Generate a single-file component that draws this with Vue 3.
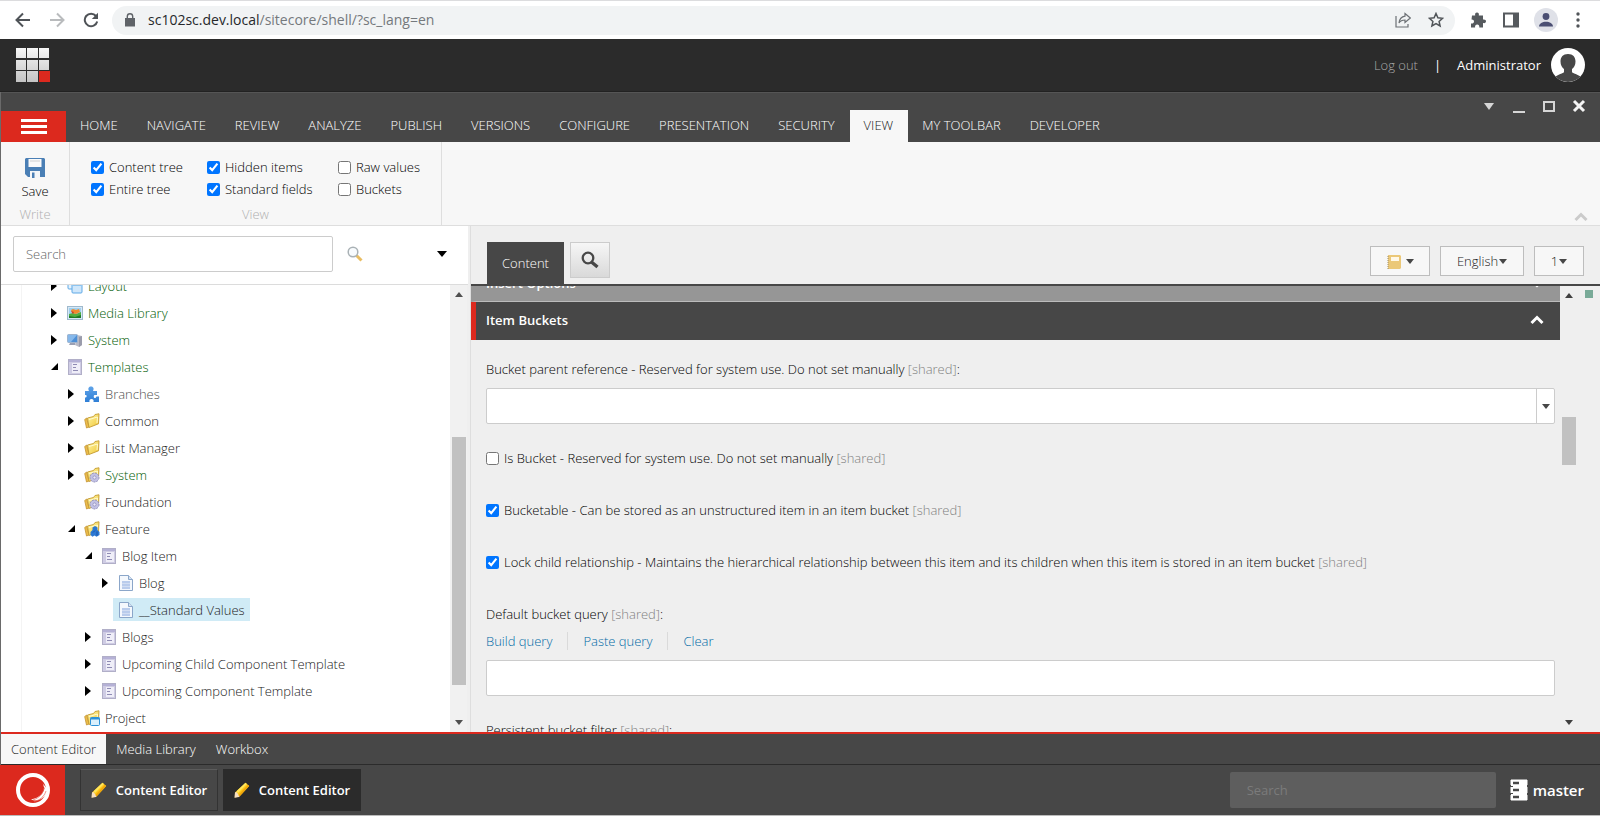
<script setup>
import { ref } from 'vue'

const ribbonTabs = ['HOME', 'NAVIGATE', 'REVIEW', 'ANALYZE', 'PUBLISH', 'VERSIONS', 'CONFIGURE', 'PRESENTATION', 'SECURITY', 'VIEW', 'MY TOOLBAR', 'DEVELOPER']
const activeTab = ref('VIEW')

const viewOptions = ref([
  { id: 'content-tree', label: 'Content tree', on: true },
  { id: 'hidden-items', label: 'Hidden items', on: true },
  { id: 'raw-values', label: 'Raw values', on: false },
  { id: 'entire-tree', label: 'Entire tree', on: true },
  { id: 'standard-fields', label: 'Standard fields', on: true },
  { id: 'buckets', label: 'Buckets', on: false },
])

const tree = [
  { label: 'Layout', level: 0, state: 'closed', icon: 'layout', green: true },
  { label: 'Media Library', level: 0, state: 'closed', icon: 'media', green: true },
  { label: 'System', level: 0, state: 'closed', icon: 'computer', green: true },
  { label: 'Templates', level: 0, state: 'open', icon: 'template', green: true },
  { label: 'Branches', level: 1, state: 'closed', icon: 'puzzle', soft: true },
  { label: 'Common', level: 1, state: 'closed', icon: 'folder' },
  { label: 'List Manager', level: 1, state: 'closed', icon: 'folder' },
  { label: 'System', level: 1, state: 'closed', icon: 'folder-gear', green: true },
  { label: 'Foundation', level: 1, state: 'leaf', icon: 'folder-gear' },
  { label: 'Feature', level: 1, state: 'open', icon: 'folder-cubes' },
  { label: 'Blog Item', level: 2, state: 'open', icon: 'template' },
  { label: 'Blog', level: 3, state: 'closed', icon: 'document' },
  { label: '__Standard Values', level: 3, state: 'leaf', icon: 'document', selected: true },
  { label: 'Blogs', level: 2, state: 'closed', icon: 'template' },
  { label: 'Upcoming Child Component Template', level: 2, state: 'closed', icon: 'template' },
  { label: 'Upcoming Component Template', level: 2, state: 'closed', icon: 'template' },
  { label: 'Project', level: 1, state: 'leaf', icon: 'folder-window' },
]

const bucketChecks = ref([
  { id: 'is-bucket', label: 'Is Bucket - Reserved for system use. Do not set manually', on: false },
  { id: 'bucketable', label: 'Bucketable - Can be stored as an unstructured item in an item bucket', on: true },
  { id: 'lock-child', label: 'Lock child relationship - Maintains the hierarchical relationship between this item and its children when this item is stored in an item bucket', on: true },
])
</script>

<template>
  <div class="screen">
    <svg class="defs" aria-hidden="true">
      <defs>
        <linearGradient id="gFolder" x1="0" y1="0" x2="1" y2="1">
          <stop offset="0" stop-color="#fff7a8" /><stop offset="1" stop-color="#f0c636" />
        </linearGradient>
        <linearGradient id="gBlue" x1="0" y1="0" x2="0" y2="1">
          <stop offset="0" stop-color="#5fa3e8" /><stop offset="1" stop-color="#2f7fd6" />
        </linearGradient>
        <linearGradient id="gTile" x1="0" y1="0" x2="0" y2="1">
          <stop offset="0" stop-color="#f6f6f6" /><stop offset="1" stop-color="#c4c4c4" />
        </linearGradient>
        <symbol id="i-layout" viewBox="0 0 16 16">
          <rect x="1" y="1" width="10" height="10" rx="1" fill="#e4f2fd" stroke="#5fa9e6" />
          <rect x="5" y="5" width="10" height="10" rx="1" fill="#cfe7fb" stroke="#5fa9e6" />
          <path d="M5.500 7.500h9" stroke="#8cc4f0" />
        </symbol>
        <symbol id="i-media" viewBox="0 0 16 16">
          <rect x=".5" y="1.500" width="15" height="13" fill="#d6e8f7" stroke="#9fb9cc" />
          <rect x="2" y="3" width="12" height="10" fill="#9fd0ef" />
          <path d="M2 9l4-1 3 1 5-2v6H2z" fill="#4fae42" /><path d="M2 11l6 1 6-2v3H2z" fill="#1f7a26" />
          <path d="M4 5l2-1 3 1 3-1 1 3-4 2-4-1z" fill="#f08a2c" /><path d="M4 6l3 1-1 2z" fill="#c43d2b" />
        </symbol>
        <symbol id="i-computer" viewBox="0 0 16 16">
          <path d="M10 3l5 1v9l-3 2-4-2z" fill="#b9bac6" /><path d="M12 5l3-1v9l-3 2z" fill="#9a9cac" />
          <rect x=".5" y="2.500" width="10" height="8" rx="1" fill="#4d8fd6" stroke="#9fb4cf" />
          <path d="M1 3h9l-6 7H1z" fill="#86b8ea" /><path d="M3 11h5v2H2z" fill="#9aa0b4" />
        </symbol>
        <symbol id="i-template" viewBox="0 0 16 16">
          <rect x="1.500" y=".5" width="13" height="15" fill="#cfcce4" stroke="#b1afc8" />
          <path d="M2 2h12" stroke="#b5b1d6" stroke-width="2" />
          <rect x="5" y="4" width="8" height="10" fill="#efeef8" />
          <path d="M6 5.500h4M6 8.500h3M6 11.500h5" stroke="#8f8bb4" />
        </symbol>
        <symbol id="i-puzzle" viewBox="0 0 16 16">
          <path d="M1 5h4C3.500 2 5 .5 7 .5S10.500 2 9 5h4v4h-2.500c-1 0-1 3 0 3h1l1-1.500H15V16H9.500c.5-2-.5-3-2-3s-2.500 1-2 3H1v-4.500c2 .2 2.500-3 0-2.500z" fill="url(#gBlue)" />
        </symbol>
        <symbol id="i-folder" viewBox="0 0 16 16">
          <path d="M.7 6.500l2-1.500L5 14l-2.500 1z" fill="#edbd4a" stroke="#c39333" stroke-width=".8" />
          <path d="M3.500 5l6-1.500L11 1.500 15 .8l-.5 10L5 14.500z" fill="url(#gFolder)" stroke="#c49a30" stroke-width=".9" />
          <path d="M5 6.500L13.500 4l-.5 6" stroke="#fffbd0" fill="none" />
        </symbol>
        <symbol id="i-folder-gear" viewBox="0 0 16 16">
          <use href="#i-folder" />
          <circle cx="10.500" cy="10.500" r="4.500" fill="#c2c1e4" stroke="#9290bd" stroke-dasharray="2 1" />
          <circle cx="10.500" cy="10.500" r="1.600" fill="#e9e8f8" stroke="#8c8ab8" stroke-width=".7" />
        </symbol>
        <symbol id="i-folder-cubes" viewBox="0 0 16 16">
          <use href="#i-folder" />
          <path d="M11 5l2.500 1.500V9l2 2v3l-3 1.800-2-1.300-2 1.300L6.500 14v-3l2-2V6.500z" fill="#2c78d2" />
          <path d="M11 9.500l-2 2M13 10.500v4" stroke="#174d9c" stroke-width=".8" />
        </symbol>
        <symbol id="i-folder-window" viewBox="0 0 16 16">
          <use href="#i-folder" />
          <rect x="6.500" y="7.500" width="9" height="8" rx="1" fill="#d9effc" stroke="#2c91d8" />
          <path d="M6.500 8.500h9" stroke="#2c91d8" stroke-width="2" />
        </symbol>
        <symbol id="i-document" viewBox="0 0 16 16">
          <path d="M1.500.5h9l4 4v11h-13z" fill="#f4f8fd" stroke="#8ba6c9" />
          <path d="M10.500.5v4h4" fill="#d5e2f2" stroke="#8ba6c9" />
          <path d="M4 6h8v8H4z" fill="#b9ccec" /><path d="M4 8.500h8M4 11.500h8" stroke="#d1ddf2" />
        </symbol>
        <symbol id="i-pencil" viewBox="0 0 16 16">
          <path d="M1 10.500L11.500.8 15.200 4 5.500 14.500l-4.700 1z" fill="#ffc818" />
          <path d="M2.500 9.200L11.500.8 12.900 2 4 11z" fill="#ffe65c" />
          <path d="M1 10.500l1.500-.5 3 4-.5 1-4.500.7z" fill="#f5dfc3" />
          <path d="M5.500 14.500L15.200 4l-1.300-1.200L4.300 13z" fill="#f0a60c" />
        </symbol>
      </defs>
    </svg>

    <!-- Browser bar -->
    <div class="browser">
      <button class="bare nav-btn" aria-label="Back">
        <svg width="16" height="16" viewBox="0 0 16 16" fill="none" stroke="#4f5357" stroke-width="2"><path d="M15 8H2M8 1.500L1.500 8 8 14.500" /></svg>
      </button>
      <button class="bare nav-btn" aria-label="Forward">
        <svg width="16" height="16" viewBox="0 0 16 16" fill="none" stroke="#b9bbbd" stroke-width="2"><path d="M1 8h13M8 1.500L14.500 8 8 14.500" /></svg>
      </button>
      <button class="bare nav-btn" aria-label="Reload">
        <svg width="16" height="16" viewBox="0 0 16 16"><path d="M13 4A6.300 6.300 0 1 0 14.200 9.500" fill="none" stroke="#4f5357" stroke-width="2" /><path d="M15 .8V7H8.800z" fill="#4f5357" /></svg>
      </button>
      <div class="address">
        <svg width="10" height="14" viewBox="0 0 10 14"><path d="M0 5h10v8.500H0z" fill="#5f6368" /><path d="M2.300 6V3.500a2.700 2.700 0 0 1 5.400 0V6" fill="none" stroke="#5f6368" stroke-width="1.400" /></svg>
        <span class="url"><b>sc102sc.dev.local</b>/sitecore/shell/?sc_lang=en</span>
        <button class="bare" aria-label="Share">
          <svg width="16" height="16" viewBox="0 0 16 16" fill="none" stroke="#6d7175" stroke-width="1.200"><path d="M1 4v11h12v-3" /><path d="M10 1.500L15.300 6 10 10.500V8C7 8 5.200 9 4 11c.4-3.500 2.200-6.200 6-6.800z" /></svg>
        </button>
        <button class="bare" aria-label="Bookmark">
          <svg width="16" height="16" viewBox="0 0 16 16" fill="none" stroke="#505458" stroke-width="1.500"><path d="M8 1.500l1.900 4.300 4.700.5-3.500 3.100 1 4.600L8 11.600 3.900 14l1-4.600L1.400 6.300l4.700-.5z" /></svg>
        </button>
      </div>
      <div class="browser-tools">
        <button class="bare" aria-label="Extensions">
          <svg width="16" height="16" viewBox="0 0 16 16"><path d="M2 3.500h3.200C4.800 1.500 5.500.5 7 .5s2.200 1 1.800 3H13v4c2-.3 3 .5 3 1.800S15 11.500 13 11v4.500H9.300c.3-2-.7-3-2.100-3s-2.400 1-2.100 3H1v-4c2 .2 3-.7 3-2S3 7.300 1.500 7.500z" fill="#565a5e" /></svg>
        </button>
        <button class="bare" aria-label="Side panel">
          <svg width="16" height="16" viewBox="0 0 16 16"><path d="M1 1.500h14v13H1z" fill="#fff" stroke="#565a5e" stroke-width="2" /><path d="M10 1h5v14h-5z" fill="#565a5e" /></svg>
        </button>
        <button class="bare" aria-label="Profile">
          <svg width="24" height="24" viewBox="0 0 24 24"><circle cx="12" cy="12" r="12" fill="#dfe1e8" /><circle cx="12" cy="8.500" r="3.400" fill="#4b4f73" /><path d="M5 18.500c0-6.500 14-6.500 14 0z" fill="#4b4f73" /></svg>
        </button>
        <button class="bare" aria-label="Menu">
          <svg width="4" height="16" viewBox="0 0 4 16" fill="#505458"><circle cx="2" cy="2" r="1.700" /><circle cx="2" cy="8" r="1.700" /><circle cx="2" cy="14" r="1.700" /></svg>
        </button>
      </div>
    </div>

    <!-- Global header -->
    <header class="global">
      <a href="#" aria-label="Launchpad">
        <svg width="34" height="34" viewBox="0 0 34 34" fill="url(#gTile)">
          <path d="M0 0h10v10H0zM11 0h11v10H11zM23 0h10v10H23zM0 12h10v10H0zM11 12h11v10H11zM23 12h10v10H23zM0 23h10v11H0zM11 23h11v11H11z" />
          <path d="M23 23h11v11H23z" fill="#dc291e" />
        </svg>
      </a>
      <div class="account">
        <a href="#" class="logout">Log out</a>
        <span class="pipe">|</span>
        <span class="user">Administrator</span>
        <svg width="34" height="34" viewBox="0 0 34 34">
          <circle cx="17" cy="17" r="17" fill="#fff" />
          <path d="M17 6c5 0 7.500 3 7.500 7.500 0 3.500-1.500 6-3.500 7.500v3c0 1 5 2 8.500 4.500a17 17 0 0 1-25 0C8 26 13 25 13 24v-3c-2-1.500-3.500-4-3.500-7.500C9.500 9 12 6 17 6z" fill="#474747" />
        </svg>
      </div>
    </header>

    <!-- Content Editor window -->
    <div class="window">
      <nav class="titlebar">
        <button class="bare hamburger" aria-label="Application menu"><i></i><i></i><i></i></button>
        <button v-for="t in ribbonTabs" :key="t" class="bare tab" :class="{ active: t === activeTab }" @click="activeTab = t">{{ t }}</button>
        <div class="win-buttons">
          <button class="bare" aria-label="More"><svg width="14" height="14" viewBox="0 0 14 14"><path d="M2 4h10l-5 7z" fill="#d6d6d6" /></svg></button>
          <button class="bare" aria-label="Minimize"><svg width="14" height="14" viewBox="0 0 14 14"><path d="M1 12h12v2H1z" fill="#d6d6d6" /></svg></button>
          <button class="bare" aria-label="Maximize"><svg width="14" height="14" viewBox="0 0 14 14"><path d="M2 3h10v9H2z" fill="none" stroke="#d6d6d6" stroke-width="2" /></svg></button>
          <button class="bare" aria-label="Close"><svg width="14" height="14" viewBox="0 0 14 14"><path d="M2 2l10 10M12 2L2 12" stroke="#f4f4f4" stroke-width="3" /></svg></button>
        </div>
      </nav>

      <div class="ribbon">
        <section class="chunk write">
          <button class="bare save">
            <svg width="20" height="20" viewBox="0 0 20 20"><path d="M1 0h18l1 1v18H3l-3-3V1z" fill="#4a7fb5" /><path d="M3.500 1h13v8h-13z" fill="#fafafa" /><path d="M5 3h10" stroke="#d0d0d0" /><path d="M5 13h10v7H5z" fill="#f3f6f9" /><path d="M7 14.500h2.500V20H7z" fill="#4a7fb5" /></svg>
            <span>Save</span>
          </button>
          <span class="chunk-name">Write</span>
        </section>
        <section class="chunk view">
          <div class="options">
            <label v-for="o in viewOptions" :key="o.id" :for="o.id"><input :id="o.id" v-model="o.on" type="checkbox">{{ o.label }}</label>
          </div>
          <span class="chunk-name">View</span>
        </section>
        <button class="bare collapse" aria-label="Collapse ribbon">
          <svg width="14" height="10" viewBox="0 0 14 10"><path d="M1.500 8L7 2.500 12.500 8" fill="none" stroke="#cbcbcb" stroke-width="3" /></svg>
        </button>
      </div>

      <div class="body">
        <aside class="left">
          <div class="tree-search">
            <input type="text" placeholder="Search" aria-label="Search the content tree">
            <button class="bare" aria-label="Search">
              <svg width="16" height="16" viewBox="0 0 16 16"><path d="M9.500 9.500l5 5" stroke="#e9bd62" stroke-width="3" /><circle cx="6" cy="6" r="4.800" fill="#f8fbfd" stroke="#a9b1b5" stroke-width="1.500" /></svg>
            </button>
            <button class="bare options-arrow" aria-label="Search options"><svg width="10" height="6" viewBox="0 0 10 6"><path d="M0 0h10L5 6z" fill="#000" /></svg></button>
          </div>
          <div class="tree-area">
            <ul class="tree">
              <li v-for="(n, i) in tree" :key="i" :style="{ paddingLeft: n.level * 17 + 'px' }">
                <span class="toggle">
                  <button v-if="n.state !== 'leaf'" class="bare" :aria-label="n.state === 'open' ? 'Collapse' : 'Expand'">
                    <svg v-if="n.state === 'closed'" width="6" height="10" viewBox="0 0 6 10"><path d="M0 0l6 5-6 5z" /></svg>
                    <svg v-else width="7" height="7" viewBox="0 0 7 7"><path d="M7 0v7H0z" /></svg>
                  </button>
                </span>
                <a href="#" :class="{ green: n.green, soft: n.soft, selected: n.selected }">
                  <svg width="16" height="16"><use :href="'#i-' + n.icon" /></svg>{{ n.label }}
                </a>
              </li>
            </ul>
            <div class="scrollbar tree-bar">
              <svg width="8" height="5" viewBox="0 0 8 5"><path d="M0 5h8L4 0z" fill="#505050" /></svg>
              <div class="track"><i></i></div>
              <svg width="8" height="5" viewBox="0 0 8 5"><path d="M0 0h8L4 5z" fill="#505050" /></svg>
            </div>
          </div>
        </aside>

        <main class="right">
          <div class="editor-tabs">
            <button class="bare content-tab">Content</button>
            <button class="search-tab" aria-label="Search tab">
              <svg width="18" height="18" viewBox="0 0 18 18"><path d="M10.500 11l6 5" stroke="#474747" stroke-width="3.400" /><circle cx="7" cy="7" r="5.300" fill="none" stroke="#474747" stroke-width="2.300" /></svg>
            </button>
            <div class="selectors">
              <button class="drop-btn first" aria-label="Navigate">
                <svg width="14" height="14" viewBox="0 0 14 14"><path d="M1 0h12l1 1v12l-1 1H1z" fill="#ebc878" /><path d="M4 2h8v4H4z" fill="#fff8e8" /><path d="M1 1v13" stroke="#9c8b66" stroke-dasharray="1 1" /></svg>
                <svg class="caret" width="8" height="5" viewBox="0 0 8 5"><path d="M0 0h8L4 5z" /></svg>
              </button>
              <button class="drop-btn lang">English<svg class="caret" width="8" height="5" viewBox="0 0 8 5"><path d="M0 0h8L4 5z" /></svg></button>
              <button class="drop-btn version">1<svg class="caret" width="8" height="5" viewBox="0 0 8 5"><path d="M0 0h8L4 5z" /></svg></button>
            </div>
          </div>

          <div class="editor">
            <div class="fields">
              <div class="fields-scroll">
                <h2 class="section closed">Insert Options
                  <svg width="14" height="10" viewBox="0 0 14 10"><path d="M1.500 2L7 7.500 12.500 2" fill="none" stroke="#fff" stroke-width="3" /></svg>
                </h2>
                <h2 class="section">Item Buckets
                  <svg width="14" height="10" viewBox="0 0 14 10"><path d="M1.500 8L7 2.500 12.500 8" fill="none" stroke="#fff" stroke-width="3" /></svg>
                </h2>
                <div class="section-body">
                  <div class="field">
                    <label for="parent-ref">Bucket parent reference - Reserved for system use. Do not set manually <em>[shared]</em>:</label>
                    <div class="combo">
                      <select id="parent-ref"><option value=""></option></select>
                      <span><svg width="8" height="5" viewBox="0 0 8 5"><path d="M0 0h8L4 5z" fill="#474747" /></svg></span>
                    </div>
                  </div>
                  <label v-for="c in bucketChecks" :key="c.id" :for="c.id" class="check"><input :id="c.id" v-model="c.on" type="checkbox"><span>{{ c.label }} <em>[shared]</em></span></label>
                  <div class="field">
                    <label for="default-query">Default bucket query <em>[shared]</em>:</label>
                    <div class="links"><a href="#">Build query</a><a href="#">Paste query</a><a href="#">Clear</a></div>
                    <input id="default-query" class="text" type="text">
                  </div>
                  <div class="field">
                    <label for="persistent-filter">Persistent bucket filter <em>[shared]</em>:</label>
                    <input id="persistent-filter" class="text" type="text">
                  </div>
                </div>
              </div>
            </div>
            <div class="scrollbar editor-bar">
              <svg width="8" height="5" viewBox="0 0 8 5"><path d="M0 5h8L4 0z" fill="#404040" /></svg>
              <div class="track"><i></i></div>
              <svg width="8" height="5" viewBox="0 0 8 5"><path d="M0 0h8L4 5z" fill="#404040" /></svg>
            </div>
            <div class="gutter"><i></i></div>
          </div>
        </main>
      </div>

      <nav class="bottom-tabs">
        <a href="#" class="active">Content Editor</a><a href="#">Media Library</a><a href="#">Workbox</a>
      </nav>
    </div>

    <footer class="taskbar">
      <button class="bare start" aria-label="Start">
        <svg width="34" height="34" viewBox="0 0 34 34"><circle cx="17" cy="17" r="15" fill="none" stroke="#fff" stroke-width="4" /><path d="M26.500 10c1.500 2 .5 3 2 5-1 6-6 10-13.500 11.500 8 3.500 16-3 16.500-10z" fill="#fff" /><path d="M28 15c-1 6-5 10-11 12M30 18c-2 6-6 9-12 10.500" fill="none" stroke="#e4655c" stroke-width=".7" /></svg>
      </button>
      <button class="bare task"><svg width="16" height="16"><use href="#i-pencil" /></svg>Content Editor</button>
      <button class="bare task current"><svg width="16" height="16"><use href="#i-pencil" /></svg>Content Editor</button>
      <input type="text" placeholder="Search" aria-label="Search">
      <button class="bare database">
        <svg width="18" height="22" viewBox="0 0 18 22"><path d="M1 1h16v5l-1 1 1 1v6l-1 1 1 1v5H1v-5l1-1-1-1V8l1-1-1-1z" fill="#fff" stroke="#fff" /><path d="M3 4h6M3 11h6M3 18h6" stroke="#474747" stroke-width="2.400" /><path d="M0 7.500h3M0 14.500h3" stroke="#474747" /></svg>
        master
      </button>
    </footer>
  </div>
</template>

<style>
html, body { margin: 0; background: #fff; overflow: hidden; }
</style>

<style scoped>
.screen { height: 100vh; display: flex; flex-direction: column; font-family: "Open Sans", "Noto Sans", sans-serif; font-size: 13px; line-height: 18px; font-weight: 300; color: #222; overflow: hidden; }
.screen *, .screen { box-sizing: border-box; }
.defs { position: absolute; width: 0; height: 0; }
svg { display: block; flex: none; }
a { color: inherit; text-decoration: none; }
em { font-style: normal; color: #808080; }
button, input, select { font: inherit; }
.bare { border: 0; padding: 0; background: none; color: inherit; display: flex; align-items: center; justify-content: center; }
input[type="checkbox"] { width: 13px; height: 13px; margin: 0; flex: none; }

.browser { height: 39px; flex: none; border-top: 1px solid #dcdcde; display: flex; align-items: center; padding: 0 20px 0 15px; }
.nav-btn { width: 16px; margin-right: 18px; }
.address { flex: 1; height: 29px; border-radius: 15px; background: #f1f3f4; display: flex; align-items: center; padding: 0 11px 0 13px; gap: 17px; margin-left: -5px; }
.address > svg + .url { margin-left: -4px; }
.url { flex: 1; font-size: 14px; font-weight: 400; color: #75797d; }
.url b { font-weight: 400; color: #26282b; }
.browser-tools { display: flex; align-items: center; gap: 15px; padding-left: 15px; }
.browser-tools button:first-child { margin-right: 2px; }
.browser-tools button:last-child { margin-left: 3px; }

.global { height: 53px; flex: none; background: #2b2b2b; border-bottom: 1px solid #222; display: flex; align-items: center; justify-content: space-between; padding: 0 15px 0 16px; }
.account { display: flex; align-items: center; color: #fff; }
.logout { color: #a8a8a8; }
.pipe { margin: 0 16px; font-weight: 400; }
.user { font-weight: 500; margin-right: 10px; }

.window { flex: 1; min-height: 0; display: flex; flex-direction: column; border-left: 1px solid #6a6a6a; }
.titlebar { height: 50px; flex: none; background: #474747; border-top: 1px solid #555; display: flex; align-items: flex-end; color: #fff; }
.hamburger { width: 65px; height: 31px; background: #dc291e; flex-direction: column; gap: 3px; }
.hamburger i { width: 26px; height: 3px; background: #fff; }
.tab { height: 32px; padding: 0 15px 2px 14px; }
.tab.active { background: #f7f7f7; color: #222; }
.win-buttons { margin: 0 14px 0 auto; align-self: flex-start; display: flex; gap: 16px; padding-top: 6px; }

.ribbon { height: 84px; flex: none; background: #f7f7f7; border-bottom: 1px solid #dedede; display: flex; color: #000; }
.chunk { border-right: 1px solid #dedede; display: flex; flex-direction: column; align-items: center; justify-content: space-between; padding-bottom: 2px; }
.write { width: 69px; }
.view { width: 372px; padding-top: 16px; }
.save { flex-direction: column; gap: 4px; padding-top: 16px; }
.chunk-name { color: #b0b0b0; }
.options { display: grid; grid-template-columns: 116px 131px auto; row-gap: 4px; align-self: stretch; padding-left: 21px; }
.options label { display: flex; align-items: center; gap: 5px; }
.collapse { margin: auto 12px 3px auto; }

.body { flex: 1; min-height: 0; display: flex; }
.left { width: 470px; flex: none; display: flex; flex-direction: column; border-right: 1px solid #dedede; background: #efefef; }
.tree-search { height: 59px; flex: none; background: #fff; border-bottom: 1px solid #dcdcdc; margin-right: 2px; display: flex; align-items: center; padding: 0 21px 2px 12px; }
.tree-search input { width: 320px; height: 36px; border: 1px solid #ccc; border-radius: 2px; padding: 0 12px; margin-right: 14px; background: #fff; }
.tree-search input::placeholder { color: #666; }
.options-arrow { margin-left: auto; }
.tree-area { flex: 1; min-height: 0; display: flex; overflow: hidden; }
.tree { flex: 1; list-style: none; margin: 0; padding: 0 0 0 50px; background: linear-gradient(90deg, #fff 20px, #f4f4f4 20px, #f4f4f4 21px, #fff 21px); }
.tree li { height: 27px; display: flex; align-items: center; }
.tree li:first-child { margin-top: -13px; }
.toggle { width: 11px; display: flex; }
.tree a { height: 23px; display: flex; align-items: center; gap: 5px; padding: 0 5px; color: #222; white-space: nowrap; }
.tree a.green { color: #005c04; }
.tree a.soft { color: #505050; }
.tree a.selected { background: #d0ebf6; color: #222; }
.scrollbar { width: 17px; flex: none; background: #f1f1f1; display: flex; flex-direction: column; align-items: center; padding: 7px 0; }
.track { flex: 1; width: 14px; margin: 4px 0; }
.track i { display: block; background: #c1c1c1; }
.tree-bar { margin-right: 3px; }
.tree-bar .track { padding-top: 136px; }
.tree-bar .track i { height: 248px; }
.editor-bar { background: #efefef; }
.editor-bar .track { padding-top: 115px; }
.editor-bar .track i { height: 48px; }

.right { flex: 1; min-width: 0; display: flex; flex-direction: column; background: #efefef; }
.editor-tabs { height: 60px; flex: none; border-bottom: 2px solid #474747; display: flex; align-items: flex-end; padding: 0 16px; }
.content-tab { width: 77px; height: 42px; background: #474747; color: #fff; }
.search-tab { width: 40px; height: 36px; margin: 0 0 6px 6px; padding: 0; border: 1px solid #ccc; background: linear-gradient(#f6f6f6, #d9d9d9); display: flex; align-items: center; justify-content: center; }
.selectors { margin-left: auto; display: flex; gap: 10px; padding-bottom: 8px; }
.drop-btn { height: 30px; padding: 0; border: 1px solid #bdbdbd; background: #f7f7f7; color: #222; display: flex; align-items: center; justify-content: center; gap: 1px; }
.first { width: 60px; gap: 5px; }
.first svg:first-child { margin-top: 2px; }
.lang { width: 84px; }
.version { width: 50px; }
.caret { fill: #474747; }
.editor { flex: 1; min-height: 0; display: flex; }
.fields { flex: 1; min-width: 0; overflow: hidden; color: #000; }
.fields-scroll { margin-top: -22px; }
.section { height: 38px; margin: 0; padding: 0 16px 2px 10px; border-left: 5px solid #dc291e; background: #474747; color: #fff; font-size: 13px; line-height: 18px; font-weight: 600; display: flex; align-items: center; justify-content: space-between; }
.section.closed { background: #969696; border-left-color: #969696; border-bottom: 1px solid #bcbcbc; padding-bottom: 0; }
.section-body { padding: 20px 5px 0 15px; }
.field { display: flex; flex-direction: column; margin-bottom: 25px; }
.field > label { line-height: 18px; margin-bottom: 10px; }
.combo { display: grid; }
.combo > * { grid-area: 1 / 1; }
.combo select, .text { width: 100%; height: 36px; border: 1px solid #ccc; border-radius: 2px; background: #fff; appearance: none; padding: 0 8px; }
.combo span { justify-self: end; width: 19px; border-left: 1px solid #ccc; display: flex; align-items: center; justify-content: center; pointer-events: none; }
.check { display: flex; align-items: center; gap: 5px; height: 18px; margin-bottom: 34px; }
.links { display: flex; margin: -1px 0 10px; color: #006aa6; }
.links a { padding: 0 15px; border-left: 1px solid #dadada; }
.links a:first-child { padding-left: 0; border: 0; }
.gutter { width: 23px; flex: none; padding: 4px 0 0 8px; }
.gutter i { display: block; width: 8px; height: 8px; background: #79aa98; }

.bottom-tabs { height: 33px; flex: none; background: #474747; border-top: 2px solid #dc291e; border-bottom: 1px solid #2b2b2b; display: flex; color: #fff; }
.bottom-tabs a { display: flex; align-items: center; padding: 0 10px; }
.bottom-tabs .active { background: #f7f7f7; color: #222; }

.taskbar { height: 51px; flex: none; background: #474747; border-bottom: 1px solid #bbb; display: flex; align-items: center; color: #fff; font-weight: 600; padding-right: 16px; }
.start { width: 65px; align-self: stretch; background: #dc291e; margin-right: 15px; }
.task { width: 138px; height: 42px; gap: 9px; border: 1px solid #333; border-top-color: #5c5c5c; margin-right: 5px; }
.task.current { background: #2b2b2b; border-color: #2b2b2b; }
.taskbar input { width: 266px; height: 36px; margin-left: auto; border: 0; border-radius: 2px; background: #5e5e5e; color: #fff; padding: 0 17px; font-weight: 400; }
.taskbar input::placeholder { color: #7b7b7b; }
.database { font-size: 15px; gap: 5px; margin-left: 14px; }
</style>
